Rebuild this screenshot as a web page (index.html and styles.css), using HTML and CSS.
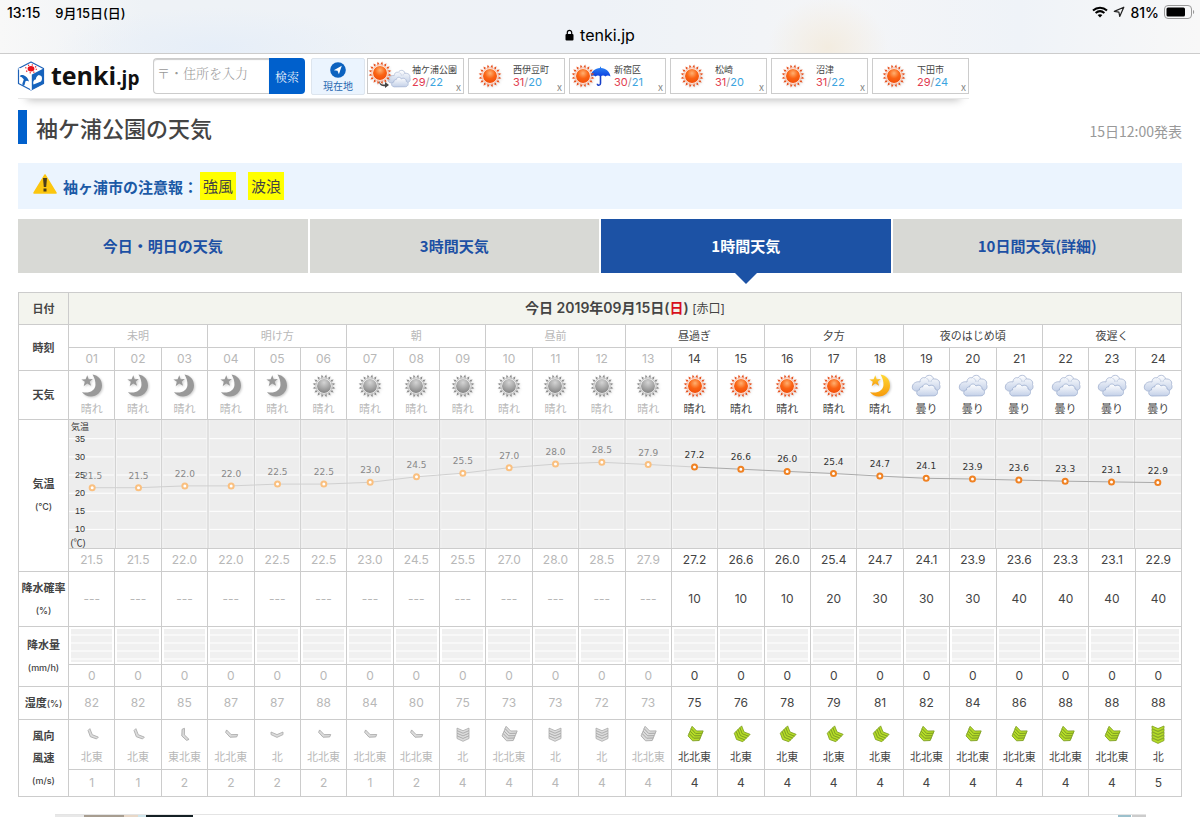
FILE: index.html
```html
<!DOCTYPE html>
<html lang="ja">
<head>
<meta charset="utf-8">
<meta name="viewport" content="width=device-width, initial-scale=1">
<title>袖ケ浦公園の天気 - tenki.jp</title>
<link rel="stylesheet" href="styles.css">
</head>
<body>
<svg class="defs" aria-hidden="true">
  <defs>
    <radialGradient id="g-sun" cx="50%" cy="30%" r="75%"><stop offset="0" stop-color="#ffb070"/><stop offset=".5" stop-color="#fa6414"/><stop offset="1" stop-color="#f04a08"/></radialGradient>
    <radialGradient id="g-sun-past" cx="50%" cy="25%" r="75%"><stop offset="0" stop-color="#d4d4d4"/><stop offset="1" stop-color="#848484"/></radialGradient>
    <linearGradient id="g-moon" x1="0" y1="0" x2="0" y2="1"><stop offset="0" stop-color="#ffd935"/><stop offset="1" stop-color="#f79a0c"/></linearGradient>
    <linearGradient id="g-cloud" x1="0" y1="0" x2="0" y2="1"><stop offset="0" stop-color="#ffffff"/><stop offset="1" stop-color="#c3d0e8"/></linearGradient>
    <linearGradient id="g-umb" x1="0" y1="0" x2="0" y2="1"><stop offset="0" stop-color="#2e86f5"/><stop offset="1" stop-color="#0b3fe0"/></linearGradient>
  </defs>
  <symbol id="moon-shape" viewBox="0 0 22 23">
    <path d="M12 .5C18 1.500 21.500 6 21.500 11.500C21.500 18 16 22.500 10.500 22.500C6.500 22.500 3 20.500 1.500 18C8 20 14.500 17 15 11C15.200 7 14 4 12 .5Z"/>
    <path d="M6.800 1.300L8.200 5.200L12.400 5L9.200 7.700L10.600 11.800L6.700 9.400L3.200 12.200L4.300 7.800L.8 5.600L5.100 5.300Z"/>
  </symbol>
  <symbol id="cloud" viewBox="0 0 30 23">
    <path d="M9 8C9 4 12.500 3 14 4C15.500.5 21.500 0 22.500 5C26.500 4.500 29.500 7 28.500 10.500C30 14 28 16.500 25 16.500L8 17C3 18 .5 15 1.500 12C2 9 6 7 9 8Z" fill="url(#g-cloud)" stroke="#aab8d4" stroke-width=".9"/>
    <path d="M15.500 4.500C17 5 18 6 18 8M22.500 5C20.500 5.500 20 7 20 8" fill="none" stroke="#b9c5dc" stroke-width=".8"/>
    <path d="M11.500 13C12 9.500 16.500 9 18 12C20.500 10 24.500 12 24 15C27.500 15.500 27.500 21.500 23 21.800L9 22C4.500 21.500 5 16 8.500 16C8 14 10 12.500 11.500 13Z" fill="url(#g-cloud)" stroke="#a3b3d2" stroke-width=".9"/>
  </symbol>
  <symbol id="umbrella" viewBox="0 0 20 20">
    <path d="M10 8V16.500C10 19 7 19 7 16.800" fill="none" stroke="#1740c8" stroke-width="1.500"/>
    <path d="M9.500 2V.8H10.500V2C15 2.300 19 5.500 19.500 10C18 8.800 16 8.800 14.700 10C13.500 8.800 11.500 8.800 10 10C8.500 8.800 6.500 8.800 5.300 10C4 8.800 2 8.800.5 10C1 5.500 5 2.300 9.500 2Z" fill="url(#g-umb)"/>
  </symbol>
</svg>

<div class="chrome">
  <div class="status">
    <div class="status-side"><span>13:15</span><span class="status-date">9月15日(日)</span></div>
    <div class="status-side">
      <svg width="16" height="12" viewBox="0 0 16 12" aria-hidden="true"><path d="M1 4.500C5 .8 11 .8 15 4.500M3.600 7C6.200 4.800 9.800 4.800 12.400 7" fill="none" stroke="#000" stroke-width="2"/><path d="M8 11.600L5.600 9.100C7 7.900 9 7.900 10.400 9.100Z"/></svg>
      <svg width="12" height="12" viewBox="0 0 12 12" aria-hidden="true"><path d="M10.800 1.200L6.700 10.500L5.900 6.200L1.300 5.400Z" fill="none" stroke="#222" stroke-width="1.200" stroke-linejoin="round"/></svg>
      <span>81%</span>
      <svg width="31" height="14" viewBox="0 0 31 14" aria-hidden="true"><rect x=".5" y=".5" width="27" height="13" rx="3.500" fill="none" stroke="#999"/><rect x="2.500" y="2.500" width="18.500" height="9" rx="1.500"/><path d="M29 5C30.500 5.400 30.500 8.600 29 9Z" fill="#999"/></svg>
    </div>
  </div>
  <div class="address">
    <svg width="9" height="12" viewBox="0 0 9 12" aria-hidden="true"><rect x=".5" y="5" width="8" height="6.500" rx="1"/><path d="M2.300 5.500V3.500C2.300.6 6.700.6 6.700 3.500V5.500" fill="none" stroke="#000" stroke-width="1.200"/></svg>
    <span>tenki.jp</span>
  </div>
</div>

<div class="page">
  <header class="site-header">
    <a class="logo" href="#" aria-label="tenki.jp">
      <svg width="28" height="30" viewBox="0 0 28 30" aria-hidden="true">
        <path d="M14 1L26.500 7.500V22.500L14 29L1.500 22.500V7.500Z" fill="#fff" stroke="#1e62b8" stroke-width="1.200" stroke-linejoin="round"/>
        <path d="M14 14L26.500 7.500V22.500L14 29Z" fill="#1663bd"/>
        <path d="M1.500 7.500L14 14V29" fill="none" stroke="#fff" stroke-width="1.600"/>
        <ellipse cx="14" cy="7.800" rx="3.400" ry="2.700" fill="#e8111a"/>
        <ellipse cx="14" cy="7.800" rx="5.300" ry="4" fill="none" stroke="#e8111a" stroke-width="1.300" stroke-dasharray="1.100 2.600"/>
        <path d="M2.800 15.500C4 12.500 10.500 14.500 12 20.500C10.500 19.500 9.500 19.500 8.500 20.200L7.500 24C6.800 25.500 5 24.500 5.400 22.500L6.800 18.500C5.500 16.800 4 15.500 2.800 15.500Z" fill="#1663bd"/>
        <path d="M16.500 23.500C15.500 20.500 17.500 18.500 18.800 18.600C19 15.500 21.500 12.800 23 14.500C25.500 14.500 25.500 19 24 20.500Z" fill="#fff"/>
      </svg>
      <span class="logo-text">tenki<small>.jp</small></span>
    </a>
    <form class="search">
      <input class="search-box" type="text" placeholder="〒・住所を入力" aria-label="〒・住所を入力">
      <button class="search-button" type="button">検索</button>
    </form>
    <a class="here" href="#">
      <svg width="16" height="16" viewBox="0 0 16 16" aria-hidden="true"><circle cx="8" cy="8" r="7.800" fill="#0c62bf"/><path d="M11.800 3.800L8.900 12.200L7.500 8.700L3.800 8.200Z" fill="#fff"/></svg>
      <span>現在地</span>
    </a>
    <ul class="cards" id="cards"></ul>
  </header>

  <main>
    <div class="title-row">
      <h1>袖ケ浦公園の天気</h1>
      <time class="issued">15日12:00発表</time>
    </div>

    <section class="warning">
      <svg width="24" height="20" viewBox="0 0 24 20" aria-hidden="true"><path d="M12 1L23 19H1Z" fill="#fcc60f" stroke="#fcc60f" stroke-width="1.500" stroke-linejoin="round"/><path d="M10 4H14L13.200 13H10.800ZM10.500 14.500H13.500V17.500H10.500Z" fill="#4a3c1c"/></svg>
      <a class="warning-label" href="#">袖ヶ浦市の注意報：</a>
      <span class="badge">強風</span>
      <span class="badge">波浪</span>
    </section>

    <nav class="tabs">
      <a href="#">今日・明日の天気</a>
      <a href="#">3時間天気</a>
      <a href="#" class="active" aria-current="page">1時間天気</a>
      <a href="#">10日間天気(詳細)</a>
    </nav>

    <table class="forecast">
      <colgroup><col class="col-head"><col span="24"></colgroup>
      <tbody id="forecast"></tbody>
    </table>

    <div class="ad"><span class="ad-photo"></span><span class="ad-mark"></span></div>
  </main>
</div>
<script src="app.js"></script>
</body>
</html>
```
FILE: styles.css
```css
* { box-sizing: border-box; }
body {
  margin: 0;
  background: #fff;
  color: #444;
  font-family: "Noto Sans CJK JP", sans-serif;
  overflow-x: hidden;
}
a { color: inherit; text-decoration: none; }
.defs { position: absolute; width: 0; height: 0; }

.chrome {
  height: 54px;
  border-bottom: 1px solid #ccc;
  color: #000;
  font-family: Inter, "Noto Sans CJK JP", sans-serif;
  background:
    radial-gradient(ellipse 60px 50px at 69% 90%, #f3ece0, transparent),
    radial-gradient(ellipse 160px 40px at 18% 90%, #e6eef8, transparent),
    linear-gradient(90deg, #f8f8f8, #eef2f6 12%, #eef2f7 50%, #f4f5f7 70%, #eff3f8 85%, #f8f8f8);
}
.status, .status-side, .address { display: flex; align-items: center; }
.status { justify-content: space-between; height: 24px; padding: 0 5px 0 7px; font-size: 14px; font-weight: 500; }
.status-side { gap: 5px; }
.status-date { margin-left: 10px; font-size: 13px; }
.address { justify-content: center; gap: 6px; height: 22px; font-size: 16px; }

.page { padding: 0 18px; }
.site-header {
  display: flex;
  align-items: center;
  width: fit-content;
  height: 45px;
  border-bottom: 1px solid #e8e8e8;
  box-shadow: 0 10px 9px -9px #bbb;
}
.logo { display: flex; align-items: center; gap: 6px; width: 135px; margin-left: -1px; margin-right: 1px; color: #111; }
.logo-text { font: 700 25px/32px "Open Sans", sans-serif; }
.logo-text small { font-size: 19px; }
.search { display: flex; width: 152px; height: 36px; }
.search-box {
  width: 116px;
  min-width: 0;
  padding: 0 0 8px 3px;
  border: 1px solid #ccc;
  border-right: 0;
  border-radius: 4px 0 0 4px;
  box-shadow: inset 0 1px 1px #ccc;
  font: 300 13px "Noto Serif CJK JP", "Noto Sans CJK JP", serif;
}
.search-box::placeholder { color: #999; }
.search-button {
  width: 36px;
  padding: 0;
  border: 0;
  border-radius: 0 4px 4px 0;
  background: #0060cc;
  color: #fff;
  font: 300 12px "Noto Serif CJK JP", "Noto Sans CJK JP", serif;
}
.here {
  display: flex;
  flex-direction: column;
  align-items: center;
  width: 54px;
  height: 37px;
  margin: 0 2px 0 6px;
  padding-top: 3px;
  border: 1px solid #dde5ee;
  border-radius: 2px;
  background: #ebf4fe;
  color: #2768b0;
  font-size: 10px;
  line-height: 16px;
}
.here svg { flex: none; }
.cards { display: flex; gap: 4px; margin: 0; padding: 0; list-style: none; }
.card {
  position: relative;
  display: grid;
  grid-template-columns: 44px 1fr;
  align-items: center;
  width: 97px;
  height: 36px;
  border: 1px solid #ccc;
}
.card-icons { display: flex; align-items: center; justify-content: center; height: 28px; padding-right: 2px; }
.card-icons svg { flex: none; }
.card-icons .extra { margin-left: -5px; }
.with-cloud .sun { margin-bottom: 7px; }
.with-cloud .extra { margin-top: 5px; }
.turn { position: absolute; left: 11px; top: 22px; }
.card-name { display: block; font-size: 9px; line-height: 12px; white-space: nowrap; }
.card-temp { display: block; color: #999; font: 11px/12px Inter, sans-serif; }
.high { color: #e23c50; }
.low { color: #3ba4e0; }
.card-close {
  position: absolute;
  right: 2px;
  bottom: 0;
  padding: 0;
  border: 0;
  background: none;
  color: #888;
  font: 10px/12px "Noto Sans CJK JP", sans-serif;
}

.title-row { display: flex; justify-content: space-between; align-items: center; margin-top: 11px; }
h1 {
  margin: 0;
  padding-left: 9px;
  border-left: 9px solid #0060cc;
  font-size: 22px;
  font-weight: 500;
  line-height: 34px;
}
.issued { padding-top: 8px; color: #999; font-size: 14px; line-height: 20px; }

.warning {
  display: flex;
  align-items: center;
  height: 46px;
  margin-top: 19px;
  padding-left: 15px;
  background: #ebf4fe;
  font-size: 15px;
}
.warning svg { margin-bottom: 4px; }
.warning-label { margin: 0 2px 0 6px; color: #1c5aa6; font-weight: 700; }
.badge { margin-right: 12px; padding: 0 3px; background: #ff0; line-height: 28px; }

.tabs { display: grid; grid-template-columns: repeat(4, 1fr); gap: 2px; margin-top: 10px; }
.tabs a {
  position: relative;
  background: #d8d9d5;
  color: #1c50a4;
  font-size: 15px;
  font-weight: 700;
  line-height: 54px;
  text-align: center;
}
.tabs .active { background: #1c52a5; color: #fff; }
.tabs .active::after {
  content: "";
  position: absolute;
  top: 100%;
  left: 50%;
  margin-left: -11px;
  border: 11px solid transparent;
  border-top-color: #1c52a5;
  border-bottom: 0;
}

.forecast {
  width: 100%;
  margin-top: 19px;
  border-collapse: collapse;
  table-layout: fixed;
  text-align: center;
  font-family: Inter, "Noto Sans CJK JP", sans-serif;
  font-size: 12px;
  line-height: 16px;
}
.col-head { width: 50px; }
.forecast th, .forecast td { padding: 0; border: 1px solid #ccc; }
.forecast .past { color: #b8b8b8; }
.forecast .row-head { font-weight: 700; font-size: 11px; line-height: 22px; white-space: nowrap; }
.row-head small { font-size: 9px; font-weight: 500; }
.row-date { height: 32px; background: #f3f4ee; }
.forecast .date { font-size: 14px; font-weight: 600; }
.date small { font-size: 12px; font-weight: 400; }
.sunday { color: #d8101c; }
.row-period, .row-hour { height: 23px; }
.row-period td { font-size: 11px; }
.row-weather { height: 49px; }
.row-weather td, .row-wind td { font-size: 11px; }
.row-weather svg { display: block; margin: 0 auto 3px; }
.row-chart { height: 129px; }
.row-temp { height: 23px; }
.row-prob { height: 55px; }
.row-bar { height: 38px; }
.row-bar td {
  background: repeating-linear-gradient(#f0f0f0 0 7px, #fff 7px 8px);
  box-shadow: inset 0 0 0 2px #fff;
}
.row-rain { height: 22px; }
.row-humidity { height: 33px; }
.row-wind { height: 50px; }
.row-wind svg { display: block; margin: 0 auto 4px; }
.row-speed { height: 27px; }

.sun { overflow: visible; filter: drop-shadow(1px 1px 1px #0002); }
.moon { fill: url(#g-moon); filter: drop-shadow(1px 1px 1px #0003); }
.moon.gray { fill: #999; }
.wind { fill: #b5dc28; stroke: #7d9d20; stroke-width: 0.8; }
.wind.gray { fill: #dcdcdc; stroke: #aaa; }

.chart { display: block; width: 100%; height: 128px; background: #ededed; }
.chart text { fill: #333; font-family: "DejaVu Sans", sans-serif; font-size: 9px; text-anchor: middle; }
.chart .axis { font-family: "Liberation Sans", "Noto Sans CJK JP", sans-serif; }
.chart .faded { fill: #888; }
.grid-line { stroke: #fff; stroke-width: 1; }
.column-line { stroke: #ccc; stroke-width: 1; }
.column-edge { stroke: #f6f6f6; stroke-width: 3; }
.trend { stroke: #aaa; stroke-width: 1; }
.trend.gray { stroke: #d0d0d0; }
.point { fill: #fff; stroke: #f08223; stroke-width: 2; }
.point.gray { stroke: #fac080; }

.ad {
  display: flex;
  justify-content: space-between;
  height: 3px;
  margin: 17px 36px 0 37px;
  border-top: 1px solid #e4e4e4;
}
.ad-photo {
  width: 138px;
  background: linear-gradient(90deg, #e8e8e8 0 29px, #a79d90 29px 69px, #e8d8c8 69px 83px, #cfe6ec 83px 91px, #142024 91px);
}
.ad-mark { width: 28px; background: linear-gradient(90deg, #9cc0cc 0 13px, #fff 13px 14px, #ccc 14px); }
```
FILE: app.js
```js
const NOW = 13; // hours up to this one are in the past
const temps = [21.5, 21.5, 22.0, 22.0, 22.5, 22.5, 23.0, 24.5, 25.5, 27.0, 28.0, 28.5, 27.9, 27.2, 26.6, 26.0, 25.4, 24.7, 24.1, 23.9, 23.6, 23.3, 23.1, 22.9];
const probs = [...Array(13).fill("---"), 10, 10, 10, 20, 30, 30, 30, 40, 40, 40, 40];
const humidity = [82, 82, 85, 87, 87, 88, 84, 80, 75, 73, 73, 72, 73, 75, 76, 78, 79, 81, 82, 84, 86, 88, 88, 88];
const speeds = [1, 1, 2, 2, 2, 2, 1, 2, 4, 4, 4, 4, 4, 4, 4, 4, 4, 4, 4, 4, 4, 4, 4, 5];
const dirs = "北東 北東 東北東 北北東 北 北北東 北北東 北北東 北 北北東 北 北 北北東 北北東 北東 北東 北東 北東 北北東 北北東 北北東 北北東 北北東 北".split(" ");
const angles = { "北": 0, "北北東": 22.5, "北東": 45, "東北東": 67.5 };
const periods = ["未明", "明け方", "朝", "昼前", "昼過ぎ", "夕方", "夜のはじめ頃", "夜遅く"];
const hours = temps.map((_, i) => i + 1);

function sun(past) {
  const color = past ? "#8c8c8c" : "#e8501c";
  let rays = "";
  for (let a = 0; a < 360; a += 22.5) {
    rays += `<path d="M12 .4L13.3 3.3H10.700Z" transform="rotate(${a + 11} 12 12)" fill="${color}"/>`;
  }
  return `<svg class="sun" width="24" height="24" viewBox="0 0 24 24" aria-hidden="true">${rays}
    <circle cx="12" cy="12" r="8" fill="#fff" stroke="${past ? "#aaa" : "#f9a888"}" stroke-width=".7"/>
    <circle cx="12" cy="12" r="7" fill="url(#${past ? "g-sun-past" : "g-sun"})"/></svg>`;
}
const moon = past => `<svg class="moon${past ? " gray" : ""}" width="24" height="24" viewBox="0 0 24 24" aria-hidden="true"><use href="#moon-shape" width="23" height="23"/></svg>`;
const cloud = '<svg width="30" height="24" viewBox="0 0 30 24" aria-hidden="true"><use href="#cloud" width="30" height="23"/></svg>';

function wind(i) {
  const count = speeds[i] < 3 ? 1 : speeds[i];
  const pitch = count === 5 ? 3 : 2.6;
  let marks = "";
  for (let k = 0; k < count; k++) {
    const y = 10 + (k - (count - 1) / 2) * pitch;
    marks += `<path d="M4 ${y - 3}L10 ${y - 0.4}L16 ${y - 3}V${y - 0.4}L10 ${y + 2.4}L4 ${y - 0.4}Z"/>`;
  }
  return `<svg class="wind${i < NOW ? " gray" : ""}" width="20" height="20" viewBox="0 0 20 20" aria-hidden="true"><g transform="rotate(${angles[dirs[i]]} 10 10)">${marks}</g></svg>`;
}

function weather(h) {
  const past = h <= NOW;
  const icon = h <= 5 || h === 18 ? moon(past) : h < 18 ? sun(past) : cloud;
  return icon + (h < 19 ? "晴れ" : "曇り");
}

function chart() {
  const x = i => ((i + 0.5) / 24 * 100).toFixed(3) + "%";
  const y = t => (55 + (25 - t) * 3.63).toFixed(1);
  let s = "";
  for (let t = 35; t >= 10; t -= 5) s += `<line class="grid-line" x1="0" x2="100%" y1="${y(t)}" y2="${y(t)}"/>`;
  for (let i = 1; i < 24; i++) {
    const cx = (i / 24 * 100).toFixed(3) + "%";
    for (const c of ["column-edge", "column-line"]) s += `<line class="${c}" x1="${cx}" x2="${cx}" y1="0" y2="100%"/>`;
  }
  s += '<text class="axis" x="11" y="10">気温</text><text class="axis" x="9" y="126">(℃)</text>';
  for (let t = 35; t >= 10; t -= 5) s += `<text class="axis" x="11" y="${+y(t) + 3}">${t}</text>`;
  for (let i = 1; i < 24; i++) {
    s += `<line class="trend${i <= NOW ? " gray" : ""}" x1="${x(i - 1)}" y1="${y(temps[i - 1])}" x2="${x(i)}" y2="${y(temps[i])}"/>`;
  }
  temps.forEach((t, i) => {
    const past = i < NOW;
    s += `<circle class="point${past ? " gray" : ""}" cx="${x(i)}" cy="${y(t)}" r="2.500"/><text class="${past ? "faded" : ""}" x="${x(i)}" y="${y(t) - 9}">${t.toFixed(1)}</text>`;
  });
  return `<svg class="chart" role="img" aria-label="気温">${s}</svg>`;
}

const cells = render => hours.map((h, i) => `<td${h <= NOW ? ' class="past"' : ""}>${render(h, i)}</td>`).join("");
const head = (label, span = 1) => `<th class="row-head" scope="row" rowspan="${span}">${label}</th>`;
const row = (name, content) => `<tr class="row-${name}">${content}</tr>`;

document.getElementById("forecast").innerHTML =
  row("date", head("日付") + '<td class="date" colspan="24">今日 2019年09月15日(<span class="sunday">日</span>) <small>[赤口]</small></td>') +
  row("period", head("時刻", 2) + periods.map((p, i) => `<td colspan="3"${i < 4 ? ' class="past"' : ""}>${p}</td>`).join("")) +
  row("hour", cells(h => String(h).padStart(2, "0"))) +
  row("weather", head("天気") + cells(weather)) +
  row("chart", head("気温<br><small>(℃)</small>", 2) + `<td colspan="24">${chart()}</td>`) +
  row("temp", cells((h, i) => temps[i].toFixed(1))) +
  row("prob", head("降水確率<br><small>(%)</small>") + cells((h, i) => probs[i])) +
  row("bar", head("降水量<br><small>(mm/h)</small>", 2) + cells(() => "")) +
  row("rain", cells(() => 0)) +
  row("humidity", head("湿度<small>(%)</small>") + cells((h, i) => humidity[i])) +
  row("wind", head("風向<br>風速<br><small>(m/s)</small>", 2) + cells((h, i) => wind(i) + dirs[i])) +
  row("speed", cells((h, i) => speeds[i]));

const smallCloud = '<svg class="extra" width="24" height="19" aria-hidden="true"><use href="#cloud"/></svg><svg class="turn" width="10" height="7" viewBox="0 0 10 7" aria-hidden="true"><path d="M0 0C1 3 3 3.500 6 3.500V1L10 4L6 7V5.300C3 5.300 0 4 0 0Z" fill="#444"/></svg>';
const smallUmbrella = '<svg class="extra" width="21" height="21" aria-hidden="true"><use href="#umbrella"/></svg>';
document.getElementById("cards").innerHTML = [
  ["袖ケ浦公園", 29, 22, smallCloud, "with-cloud"],
  ["西伊豆町", 31, 20, "", ""],
  ["新宿区", 30, 21, smallUmbrella, ""],
  ["松崎", 31, 20, "", ""],
  ["沼津", 31, 22, "", ""],
  ["下田市", 29, 24, "", ""]
].map(([name, high, low, extra, kind]) => `<li class="card">
  <span class="card-icons ${kind}">${sun(false)}${extra}</span>
  <a href="#"><span class="card-name">${name}</span><span class="card-temp"><span class="high">${high}</span>/<span class="low">${low}</span></span></a>
  <button class="card-close" type="button" aria-label="${name}を削除">x</button></li>`).join("");
```
